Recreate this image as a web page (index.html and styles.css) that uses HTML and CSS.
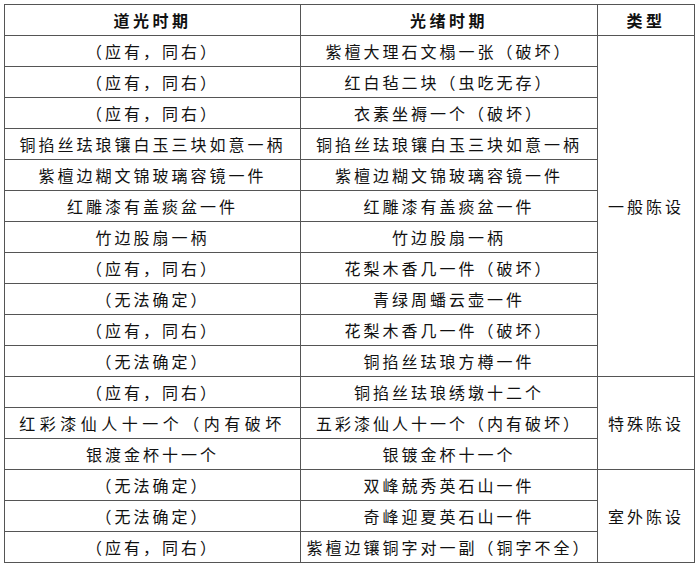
FILE: index.html
```html
<!DOCTYPE html>
<html lang="zh-CN">
<head>
<meta charset="utf-8">
<link rel="stylesheet" href="styles.css">
</head>
<body>
<table class="inv">
<colgroup><col class="c1"><col class="c2"><col class="c3"></colgroup>
<thead>
<tr><th>道光时期</th><th>光绪时期</th><th>类型</th></tr>
</thead>
<tbody>
<tr><td>（应有，同右）</td><td>紫檀大理石文榻一张（破坏）</td><td class="type" rowspan="11">一般陈设</td></tr>
<tr><td>（应有，同右）</td><td>红白毡二块（虫吃无存）</td></tr>
<tr><td>（应有，同右）</td><td>衣素坐褥一个（破坏）</td></tr>
<tr><td>铜掐丝珐琅镶白玉三块如意一柄</td><td>铜掐丝珐琅镶白玉三块如意一柄</td></tr>
<tr><td>紫檀边糊文锦玻璃容镜一件</td><td>紫檀边糊文锦玻璃容镜一件</td></tr>
<tr><td>红雕漆有盖痰盆一件</td><td>红雕漆有盖痰盆一件</td></tr>
<tr><td>竹边股扇一柄</td><td>竹边股扇一柄</td></tr>
<tr><td>（应有，同右）</td><td>花梨木香几一件（破坏）</td></tr>
<tr><td>（无法确定）</td><td>青绿周蟠云壶一件</td></tr>
<tr><td>（应有，同右）</td><td>花梨木香几一件（破坏）</td></tr>
<tr><td>（无法确定）</td><td>铜掐丝珐琅方樽一件</td></tr>
<tr><td>（应有，同右）</td><td>铜掐丝珐琅绣墩十二个</td><td class="type" rowspan="3">特殊陈设</td></tr>
<tr><td class="tight">红彩漆仙人十一个（内有破坏</td><td>五彩漆仙人十一个（内有破坏）</td></tr>
<tr><td>银渡金杯十一个</td><td>银镀金杯十一个</td></tr>
<tr><td>（无法确定）</td><td>双峰兢秀英石山一件</td><td class="type" rowspan="3">室外陈设</td></tr>
<tr><td>（无法确定）</td><td>奇峰迎夏英石山一件</td></tr>
<tr><td>（应有，同右）</td><td>紫檀边镶铜字对一副（铜字不全）</td></tr>
</tbody>
</table>
</body>
</html>
```
FILE: styles.css
```css
html, body {
  margin: 0;
  padding: 0;
  background: #ffffff;
}
body {
  padding: 4px 0 0 4px;
  font-family: "Noto Sans CJK SC", "Noto Sans", sans-serif;
  color: #111111;
}
.inv {
  border-collapse: collapse;
  table-layout: fixed;
  width: 690px;
}
.c1 { width: 296px; }
.c2 { width: 297px; }
.c3 { width: 97px; }
.inv th,
.inv td {
  border: 1px solid #555555;
  height: 30px;
  padding: 0;
  text-align: center;
  vertical-align: middle;
  font-size: 16px;
  line-height: 20px;
  letter-spacing: 3px;
  white-space: nowrap;
  overflow: hidden;
  font-weight: 400;
}
.inv th {
  font-weight: 700;
  font-size: 16px;
  letter-spacing: 3.5px;
}
.inv td.tight {
  letter-spacing: 4.5px;
}
```
